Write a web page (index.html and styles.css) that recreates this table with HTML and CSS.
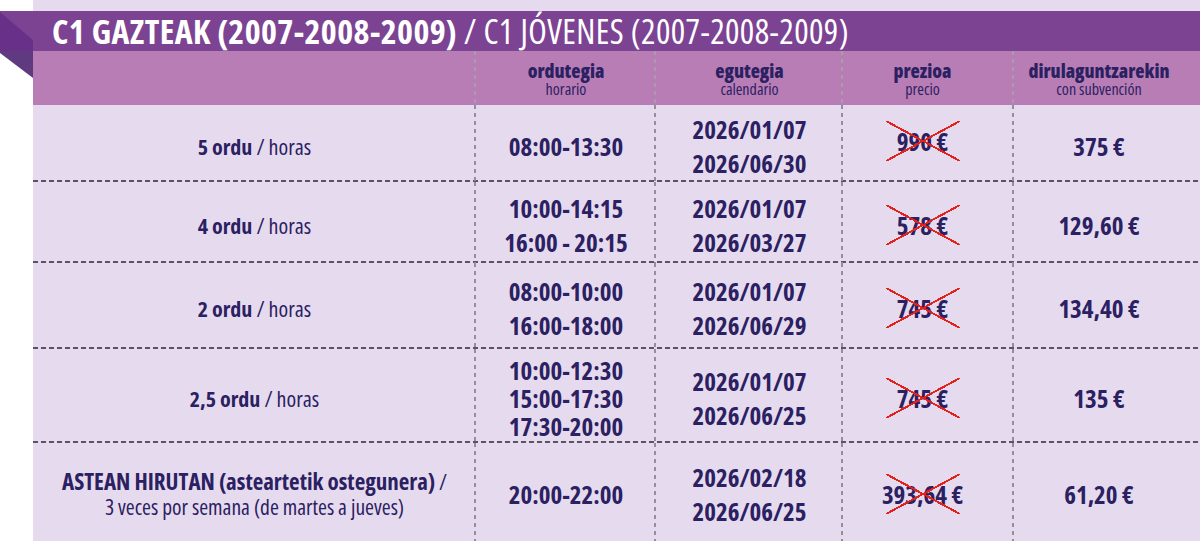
FILE: index.html
```html
<!DOCTYPE html>
<html>
    <head>
        <meta charset="utf-8">
        <title>C1 Gazteak</title>
        <link rel="stylesheet" href="styles.css">
    </head>
    <body>
        <div class="sheet">
            <div class="title-bar">
                <svg class="fold" width="33" height="67" viewBox="0 0 33 67">
                    <polygon points="0,1 33,29 33,40 0,40" fill="#69308a"/>
                    <polygon points="0,40 33,40 33,67 0,42" fill="#5f3a80"/>
                </svg>
                <h1><b>C1 GAZTEAK (2007-2008-2009)</b> / C1 JÓVENES (2007-2008-2009)</h1>
            </div>

            <div class="table">
                <div class="row head">
                    <div class="cell"></div>
                    <div class="cell"><strong>ordutegia</strong><span>horario</span></div>
                    <div class="cell"><strong>egutegia</strong><span>calendario</span></div>
                    <div class="cell price"><strong>prezioa</strong><span>precio</span></div>
                    <div class="cell sub"><strong>dirulaguntzarekin</strong><span>con subvención</span></div>
                </div>

                <div class="row r1">
                    <div class="cell label"><p><b>5 ordu</b> / horas</p></div>
                    <div class="cell"><p>08:00-13:30</p></div>
                    <div class="cell"><p>2026/01/07</p><p>2026/06/30</p></div>
                    <div class="cell price up"><span class="old">990 €</span></div>
                    <div class="cell sub"><p>375 €</p></div>
                </div>

                <div class="row r2">
                    <div class="cell label"><p><b>4 ordu</b> / horas</p></div>
                    <div class="cell"><p>10:00-14:15</p><p>16:00 - 20:15</p></div>
                    <div class="cell"><p>2026/01/07</p><p>2026/03/27</p></div>
                    <div class="cell price"><span class="old">578 €</span></div>
                    <div class="cell sub"><p>129,60 €</p></div>
                </div>

                <div class="row r3">
                    <div class="cell label"><p><b>2 ordu</b> / horas</p></div>
                    <div class="cell"><p>08:00-10:00</p><p>16:00-18:00</p></div>
                    <div class="cell"><p>2026/01/07</p><p>2026/06/29</p></div>
                    <div class="cell price"><span class="old">745 €</span></div>
                    <div class="cell sub"><p>134,40 €</p></div>
                </div>

                <div class="row r4">
                    <div class="cell label"><p><b>2,5 ordu</b> / horas</p></div>
                    <div class="cell tight"><p>10:00-12:30</p><p>15:00-17:30</p><p>17:30-20:00</p></div>
                    <div class="cell"><p>2026/01/07</p><p>2026/06/25</p></div>
                    <div class="cell price"><span class="old">745 €</span></div>
                    <div class="cell sub"><p>135 €</p></div>
                </div>

                <div class="row r5">
                    <div class="cell label long">
                        <p><b>ASTEAN HIRUTAN (asteartetik ostegunera)</b> /</p>
                        <p>3 veces por semana (de martes a jueves)</p>
                    </div>
                    <div class="cell"><p>20:00-22:00</p></div>
                    <div class="cell"><p>2026/02/18</p><p>2026/06/25</p></div>
                    <div class="cell price"><span class="old">393,64 €</span></div>
                    <div class="cell sub"><p>61,20 €</p></div>
                </div>
            </div>
        </div>
    </body>
</html>
```

FILE: styles.css
```css
body {
    margin: 0;
    background: #ffffff;
    font-family: "Open Sans", "DejaVu Sans Condensed", sans-serif;
    font-stretch: 75%;
    color: #2b2162;
}
.sheet {
    margin-left: 33px;
    padding-top: 11px;
    background: #e6dbee;
}
.title-bar {
    position: relative;
    margin-left: -33px;
    height: 40px;
    background: #7d4393;
}
.fold {
    position: absolute;
    left: 0;
    top: 0;
}
.title-bar h1 {
    margin: 0;
    padding-left: 52px;
    font-size: 34px;
    font-stretch: 83%;
    font-weight: normal;
    line-height: 40px;
    letter-spacing: 0.4px;
    color: #ffffff;
}
.title-bar b {
    font-weight: 700;
}
.row {
    display: grid;
    grid-template-columns: 443px 180px 187px 171px 186px;
    background: repeating-linear-gradient(to right, #5a5360 0 5px, transparent 5px 8px) left bottom / 100% 2px no-repeat;
}
.r1 { height: 77px; }
.r2 { height: 81px; }
.r3 { height: 86px; }
.r4 { height: 94px; }
.r5 { height: 98px; background: none; }
.cell {
    display: flex;
    flex-direction: column;
    align-items: center;
    justify-content: center;
    text-align: center;
    font-size: 25px;
    font-weight: bold;
    line-height: 34px;
    padding-top: 4px;
    background: repeating-linear-gradient(to bottom, #958e9a 0 4px, transparent 4px 8px) right top / 2px 100% no-repeat;
}
.cell:last-child {
    background: none;
}
.cell p {
    margin: 0;
}
.price {
    padding-right: 12px;
}
.up {
    padding-top: 0;
    padding-bottom: 6px;
}
.sub {
    padding-right: 16px;
}
.tight {
    line-height: 28px;
}
.label {
    font-size: 22px;
    font-weight: normal;
}
.label b {
    font-weight: bold;
}
.long {
    font-size: 21.5px;
    line-height: 25px;
}
.long b {
    font-size: 23px;
}
.head {
    height: 54px;
    background: #b97db5;
}
.head .cell {
    padding-top: 2px;
    font-size: 19px;
    background: repeating-linear-gradient(to bottom, #a99cad 0 4px, transparent 4px 8px) right top / 2px 100% no-repeat;
}
.head .cell:last-child {
    background: none;
}
.head strong {
    line-height: 20px;
}
.head span {
    font-size: 16px;
    line-height: 16px;
    font-weight: normal;
}
.old {
    position: relative;
    display: inline-block;
}
.old::after {
    content: "";
    position: absolute;
    left: 50%;
    top: 50%;
    width: 74px;
    height: 40px;
    margin: -20px 0 0 -37px;
    background:
        linear-gradient(to top right, transparent calc(50% - 1px), #e3221b calc(50% - 1px), #e3221b calc(50% + 1px), transparent calc(50% + 1px)),
        linear-gradient(to bottom right, transparent calc(50% - 1px), #e3221b calc(50% - 1px), #e3221b calc(50% + 1px), transparent calc(50% + 1px));
}
```
